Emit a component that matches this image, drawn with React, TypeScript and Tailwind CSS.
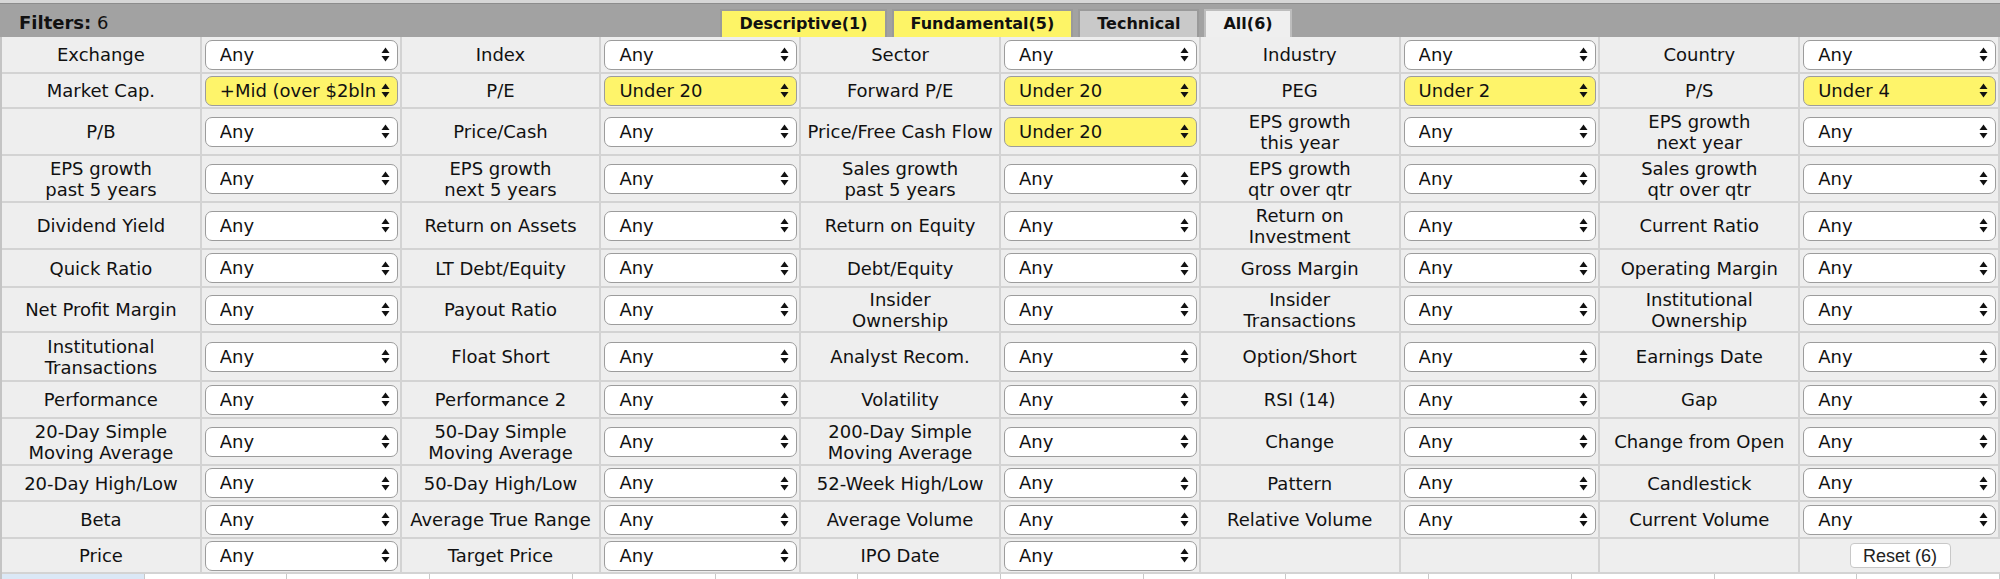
import React from 'react';

type Cell = [string, string, boolean?];

interface FilterRow {
  height: string;
  cells: Cell[];
}

const rows: FilterRow[] = [
  {
    height: 'h-[37px]',
    cells: [
      ['Exchange', 'Any'],
      ['Index', 'Any'],
      ['Sector', 'Any'],
      ['Industry', 'Any'],
      ['Country', 'Any'],
    ],
  },
  {
    height: 'h-[35px]',
    cells: [
      ['Market Cap.', '+Mid (over $2bln)', true],
      ['P/E', 'Under 20', true],
      ['Forward P/E', 'Under 20', true],
      ['PEG', 'Under 2', true],
      ['P/S', 'Under 4', true],
    ],
  },
  {
    height: 'h-[47px]',
    cells: [
      ['P/B', 'Any'],
      ['Price/Cash', 'Any'],
      ['Price/Free Cash Flow', 'Under 20', true],
      ['EPS growth\nthis year', 'Any'],
      ['EPS growth\nnext year', 'Any'],
    ],
  },
  {
    height: 'h-[47px]',
    cells: [
      ['EPS growth\npast 5 years', 'Any'],
      ['EPS growth\nnext 5 years', 'Any'],
      ['Sales growth\npast 5 years', 'Any'],
      ['EPS growth\nqtr over qtr', 'Any'],
      ['Sales growth\nqtr over qtr', 'Any'],
    ],
  },
  {
    height: 'h-[47px]',
    cells: [
      ['Dividend Yield', 'Any'],
      ['Return on Assets', 'Any'],
      ['Return on Equity', 'Any'],
      ['Return on\nInvestment', 'Any'],
      ['Current Ratio', 'Any'],
    ],
  },
  {
    height: 'h-[38px]',
    cells: [
      ['Quick Ratio', 'Any'],
      ['LT Debt/Equity', 'Any'],
      ['Debt/Equity', 'Any'],
      ['Gross Margin', 'Any'],
      ['Operating Margin', 'Any'],
    ],
  },
  {
    height: 'h-[45px]',
    cells: [
      ['Net Profit Margin', 'Any'],
      ['Payout Ratio', 'Any'],
      ['Insider\nOwnership', 'Any'],
      ['Insider\nTransactions', 'Any'],
      ['Institutional\nOwnership', 'Any'],
    ],
  },
  {
    height: 'h-[49px]',
    cells: [
      ['Institutional\nTransactions', 'Any'],
      ['Float Short', 'Any'],
      ['Analyst Recom.', 'Any'],
      ['Option/Short', 'Any'],
      ['Earnings Date', 'Any'],
    ],
  },
  {
    height: 'h-[37px]',
    cells: [
      ['Performance', 'Any'],
      ['Performance 2', 'Any'],
      ['Volatility', 'Any'],
      ['RSI (14)', 'Any'],
      ['Gap', 'Any'],
    ],
  },
  {
    height: 'h-[47px]',
    cells: [
      ['20-Day Simple\nMoving Average', 'Any'],
      ['50-Day Simple\nMoving Average', 'Any'],
      ['200-Day Simple\nMoving Average', 'Any'],
      ['Change', 'Any'],
      ['Change from Open', 'Any'],
    ],
  },
  {
    height: 'h-[36px]',
    cells: [
      ['20-Day High/Low', 'Any'],
      ['50-Day High/Low', 'Any'],
      ['52-Week High/Low', 'Any'],
      ['Pattern', 'Any'],
      ['Candlestick', 'Any'],
    ],
  },
  {
    height: 'h-[37px]',
    cells: [
      ['Beta', 'Any'],
      ['Average True Range', 'Any'],
      ['Average Volume', 'Any'],
      ['Relative Volume', 'Any'],
      ['Current Volume', 'Any'],
    ],
  },
];

const tabs = [
  { label: 'Descriptive(1)', className: 'bg-[#fdf466] border-[#9a9a9a]' },
  { label: 'Fundamental(5)', className: 'bg-[#fdf466] border-[#9a9a9a]' },
  { label: 'Technical', className: 'bg-[#c9c9c9] border-[#9a9a9a]' },
  { label: 'All(6)', className: 'bg-[#efefef] border-[#bdbdbd]' },
];

const Arrows: React.FC = () => (
  <svg width="9" height="15" viewBox="0 0 9 15" className="ml-[4px] shrink-0">
    <path d="M4.5 0.5 L8.5 6 L0.5 6 Z" fill="#111" />
    <path d="M0.5 9 L8.5 9 L4.5 14.5 Z" fill="#111" />
  </svg>
);

const FakeSelect: React.FC<{ value: string; active?: boolean }> = ({ value, active }) => (
  <div
    className={`flex h-[30px] w-full items-center rounded-[7px] border border-[#9c9c9c] pl-[14px] pr-[7px] ${
      active ? 'bg-[#fef46a]' : 'bg-white'
    }`}
  >
    <span className="min-w-0 flex-1 overflow-hidden whitespace-nowrap text-[18px] leading-[24px] text-[#111]">
      {value}
    </span>
    <Arrows />
  </div>
);

const Label: React.FC<{ text: string }> = ({ text }) => (
  <div className="flex items-center justify-center border-r-2 border-[#d3d3d3] px-[2px] text-center text-[18px] leading-[21px] text-[#111]">
    <span>
      {text.split('\n').map((line, i) => (
        <React.Fragment key={i}>
          {i > 0 && <br />}
          {line}
        </React.Fragment>
      ))}
    </span>
  </div>
);

const SelectCell: React.FC<{ value: string; active?: boolean }> = ({ value, active }) => (
  <div className="flex items-center border-r-2 border-[#d3d3d3] pl-[3px] pr-[2px]">
    <FakeSelect value={value} active={active} />
  </div>
);

export default function App() {
  return (
    <div className="h-[579px] w-[2000px] overflow-hidden bg-white font-['DejaVu_Sans',sans-serif]">
      {/* Header */}
      <div className="h-[3px] bg-[#d6d6d6]" />
      <div className="relative flex h-[34px] items-end border-t border-[#8c8c8c] bg-[#a2a2a2]">
        <div className="absolute left-[19px] top-[5px] text-[18px] text-[#111]">
          <span className="font-bold">Filters:</span> 6
        </div>
        <div className="flex w-full justify-center gap-[5px] pl-[12px]">
          {tabs.map((t) => (
            <div
              key={t.label}
              className={`flex h-[28px] items-center border-x-2 border-t-2 px-[17px] text-[16px] font-bold text-[#111] ${t.className}`}
            >
              {t.label}
            </div>
          ))}
        </div>
      </div>

      {/* Filter grid */}
      <div className="border-l-2 border-[#c4c4c4]">
        {rows.map((row, ri) => (
          <div key={ri} className={`grid grid-cols-10 border-b-2 border-[#d3d3d3] bg-[#eeeeee] ${row.height}`}>
            {row.cells.map(([label, value, active]) => (
              <React.Fragment key={label}>
                <Label text={label} />
                <SelectCell value={value} active={active} />
              </React.Fragment>
            ))}
          </div>
        ))}
        <div className="grid h-[35px] grid-cols-10 border-b-2 border-[#d3d3d3] bg-[#eeeeee]">
          <Label text="Price" />
          <SelectCell value="Any" />
          <Label text="Target Price" />
          <SelectCell value="Any" />
          <Label text="IPO Date" />
          <SelectCell value="Any" />
          <div className="border-r-2 border-[#d3d3d3]" />
          <div className="border-r-2 border-[#d3d3d3]" />
          <div className="border-r-2 border-[#d3d3d3]" />
          <div className="flex items-center justify-center">
            <button className="h-[25px] w-[101px] rounded-[4px] border border-[#c8c8c8] bg-white font-['Liberation_Sans',sans-serif] text-[18px] leading-[22px] text-[#222]">
              Reset (6)
            </button>
          </div>
        </div>
      </div>

      {/* Next section strip */}
      <div className="grid h-[20px] grid-cols-[repeat(14,minmax(0,1fr))] border-l-2 border-[#c4c4c4]">
        <div className="border-r border-[#c8c8c8] bg-[#dbe8f6]" />
        {Array.from({ length: 13 }).map((_, i) => (
          <div key={i} className="border-r border-[#c8c8c8] bg-white" />
        ))}
      </div>
    </div>
  );
}
